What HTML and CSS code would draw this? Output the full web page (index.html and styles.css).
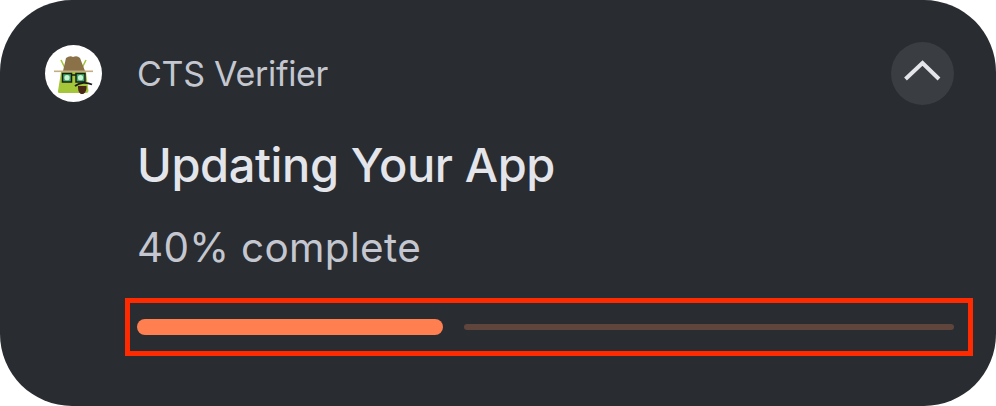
FILE: index.html
```html
<!DOCTYPE html>
<html lang="en">
<head>
  <meta charset="UTF-8" />
  <title>Updating Your App</title>
  <link rel="stylesheet" href="styles.css">
</head>
<body>
  <div class="notification">
    <div class="app-icon">
      <svg viewBox="0 0 57 57" width="57" height="57">
        <!-- antennae -->
        <path d="M16 15 L21 25 M41 15 L36 25" stroke="#a4c639" stroke-width="1.6" fill="none" />
        <!-- android body -->
        <path d="M16 27 H41 L43.500 46 Q43.500 48 41 48 H15 Q12.500 48 13 46 Z" fill="#a4c639" />
        <!-- hat -->
        <path d="M18 26 L21 13 Q25 10 28 12 Q32 10 35 13 L40 26 Z" fill="#8a7148" />
        <rect x="9" y="25.500" width="39" height="1.600" fill="#c4ad80" />
        <!-- glasses -->
        <rect x="17.500" y="28.500" width="9" height="8.500" fill="#3fae6a" stroke="#1c1c1c" stroke-width="1.500" />
        <rect x="31" y="28.500" width="9" height="8.500" fill="#3fae6a" stroke="#1c1c1c" stroke-width="1.500" />
        <circle cx="22" cy="32.700" r="2.600" fill="#c9f2d4" />
        <circle cx="35.500" cy="32.700" r="2.600" fill="#c9f2d4" />
        <path d="M26.500 30 H31" stroke="#1c1c1c" stroke-width="1.500" />
        <!-- pipe -->
        <path d="M30 41 C35 37 42 37 47 39.500" stroke="#1c1c1c" stroke-width="1.800" fill="none" />
        <path d="M33 41 H41.500 C42 46 39.500 49.500 36.500 49 C33.500 48.500 33 45 33 41 Z" fill="#4a2a16" />
      </svg>
    </div>
    <div class="content">
      <div class="top-row">
        <div class="app-name">CTS Verifier</div>
        <div class="expand-btn">
          <svg viewBox="0 0 63 63" width="63" height="63">
            <path d="M14.500 37 L31.500 21 L48 37" stroke="#e3e5ea" stroke-width="4" fill="none" />
          </svg>
        </div>
      </div>
      <div class="title">Updating Your App</div>
      <div class="subtitle">40% complete</div>
    </div>
    <div class="highlight">
      <div class="bar-done"></div>
      <div class="bar-rest"></div>
    </div>
  </div>
</body>
</html>
```

FILE: styles.css
```css
html,
body {
  margin: 0;
  background-color: #ffffff;
}

.notification {
  position: relative;
  box-sizing: border-box;
  width: 996px;
  height: 406px;
  padding: 42px 42px 0 137px;
  background-color: #292c31;
  border-radius: 72px;
  font-family: Inter, Roboto, sans-serif;
}

.app-icon {
  position: absolute;
  left: 45px;
  top: 45px;
  width: 57px;
  height: 57px;
  border-radius: 50%;
  background-color: #ffffff;
  overflow: hidden;
}

.app-icon svg,
.expand-btn svg {
  display: block;
}

.top-row {
  display: flex;
  align-items: center;
  justify-content: space-between;
  height: 63px;
}

.app-name {
  font-size: 34px;
  letter-spacing: -0.3px;
  color: #c4c7cf;
}

.expand-btn {
  width: 63px;
  height: 63px;
  border-radius: 50%;
  background-color: #3a3d42;
}

.title {
  margin-top: 32px;
  font-size: 47px;
  line-height: 56px;
  font-weight: 500;
  letter-spacing: -0.4px;
  color: #e3e5ea;
}

.subtitle {
  margin-top: 33px;
  font-size: 40.500px;
  line-height: 44px;
  letter-spacing: 0.3px;
  color: #c4c7cf;
}

.highlight {
  position: absolute;
  left: 125px;
  top: 298px;
  box-sizing: border-box;
  width: 848px;
  height: 58px;
  padding: 0 14px 0 7px;
  border: 5px solid #ff2a00;
  display: flex;
  align-items: center;
  gap: 21px;
}

.bar-done {
  width: 306px;
  height: 16px;
  border-radius: 8px;
  background-color: #ff7f50;
}

.bar-rest {
  flex: 1;
  height: 6px;
  border-radius: 3px;
  background-color: #5f453b;
}
```
